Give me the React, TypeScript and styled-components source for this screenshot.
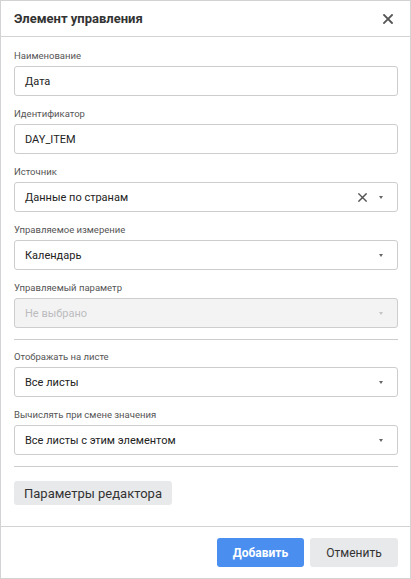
import styled, { createGlobalStyle } from 'styled-components';

const GlobalStyle = createGlobalStyle`
  html, body {
    margin: 0;
    padding: 0;
    background: #ffffff;
  }
  * {
    box-sizing: border-box;
  }
  body {
    font-family: Roboto, "Noto Sans", "Liberation Sans", sans-serif;
  }
`;

const Dialog = styled.div`
  display: flex;
  flex-direction: column;
  width: 411px;
  height: 579px;
  border: 1px solid #d3d3d6;
  background: #ffffff;
`;

const Header = styled.div`
  display: flex;
  align-items: center;
  justify-content: space-between;
  height: 36px;
  padding: 0 14px 0 13px;
  border-bottom: 1px solid #d3d3d6;
  flex-shrink: 0;
`;

const Title = styled.span`
  font-size: 13px;
  font-weight: 700;
  color: #333333;
`;

const CloseButton = styled.button`
  display: flex;
  align-items: center;
  justify-content: center;
  width: 16px;
  height: 16px;
  padding: 0;
  border: none;
  background: none;
  color: #555555;
  cursor: pointer;
`;

const Body = styled.div`
  display: flex;
  flex-direction: column;
  flex: 1;
  padding: 13px 12px 0 13px;
`;

const Field = styled.div`
  display: flex;
  flex-direction: column;
  margin-bottom: 12px;
`;

const Label = styled.label`
  font-size: 9.5px;
  line-height: 12px;
  color: #555555;
  margin-bottom: 4px;
`;

const Box = styled.div<{ $disabled?: boolean }>`
  display: flex;
  align-items: center;
  height: 30px;
  padding: 0 14px 0 10px;
  border: 1px solid #cdcdd0;
  border-radius: 3px;
  background: ${({ $disabled }) => ($disabled ? '#f3f3f4' : '#ffffff')};
  color: ${({ $disabled }) => ($disabled ? '#bcbcbe' : '#222222')};
  font-size: 11px;
`;

const BoxText = styled.span`
  flex: 1;
`;

const ClearIcon = styled.span`
  display: flex;
  align-items: center;
  margin-right: 12px;
  color: #555555;
`;

const Caret = styled.span<{ $disabled?: boolean }>`
  width: 0;
  height: 0;
  border-left: 2.5px solid transparent;
  border-right: 2.5px solid transparent;
  border-top: 3px solid ${({ $disabled }) => ($disabled ? '#c4c4c6' : '#666666')};
`;

const Divider = styled.hr`
  width: 100%;
  margin: -1px 0 11px;
  border: none;
  border-top: 1px solid #cdcdd0;
`;

const SecondaryButton = styled.button`
  align-self: flex-start;
  height: 24px;
  padding: 0 10px;
  border: none;
  border-radius: 3px;
  background: #e8e9eb;
  color: #333333;
  font-family: inherit;
  font-size: 13px;
  margin-top: 3px;
`;

const Footer = styled.div`
  display: flex;
  justify-content: flex-end;
  gap: 6px;
  height: 52px;
  padding: 11px 12px 0 0;
  border-top: 1px solid #d3d3d6;
  flex-shrink: 0;
`;

const FooterButton = styled.button<{ $primary?: boolean }>`
  height: 29px;
  padding: 0;
  width: ${({ $primary }) => ($primary ? '87px' : '88px')};
  border: none;
  border-radius: 3px;
  background: ${({ $primary }) => ($primary ? '#4a8ff0' : '#e8e9eb')};
  color: ${({ $primary }) => ($primary ? '#ffffff' : '#333333')};
  font-family: inherit;
  font-size: 12px;
  font-weight: ${({ $primary }) => ($primary ? 700 : 400)};
`;

const Cross = ({ size, width }: { size: number; width: number }) => (
  <svg width={size} height={size} viewBox="0 0 10 10">
    <path d="M1 1L9 9M9 1L1 9" stroke="currentColor" strokeWidth={width} strokeLinecap="square" />
  </svg>
);

type FieldProps = {
  label: string;
  value: string;
  disabled?: boolean;
  select?: boolean;
  clearable?: boolean;
};

function FormField({ label, value, disabled, select, clearable }: FieldProps) {
  return (
    <Field>
      <Label>{label}</Label>
      <Box $disabled={disabled}>
        <BoxText>{value}</BoxText>
        {clearable && (
          <ClearIcon>
            <Cross size={9} width={1.6} />
          </ClearIcon>
        )}
        {select && <Caret $disabled={disabled} />}
      </Box>
    </Field>
  );
}

export default function App() {
  return (
    <>
      <GlobalStyle />
      <Dialog>
        <Header>
          <Title>Элемент управления</Title>
          <CloseButton>
            <Cross size={10} width={1.8} />
          </CloseButton>
        </Header>
        <Body>
          <FormField label="Наименование" value="Дата" />
          <FormField label="Идентификатор" value="DAY_ITEM" />
          <FormField label="Источник" value="Данные по странам" select clearable />
          <FormField label="Управляемое измерение" value="Календарь" select />
          <FormField label="Управляемый параметр" value="Не выбрано" select disabled />
          <Divider />
          <FormField label="Отображать на листе" value="Все листы" select />
          <FormField label="Вычислять при смене значения" value="Все листы с этим элементом" select />
          <Divider />
          <SecondaryButton>Параметры редактора</SecondaryButton>
        </Body>
        <Footer>
          <FooterButton $primary>Добавить</FooterButton>
          <FooterButton>Отменить</FooterButton>
        </Footer>
      </Dialog>
    </>
  );
}
